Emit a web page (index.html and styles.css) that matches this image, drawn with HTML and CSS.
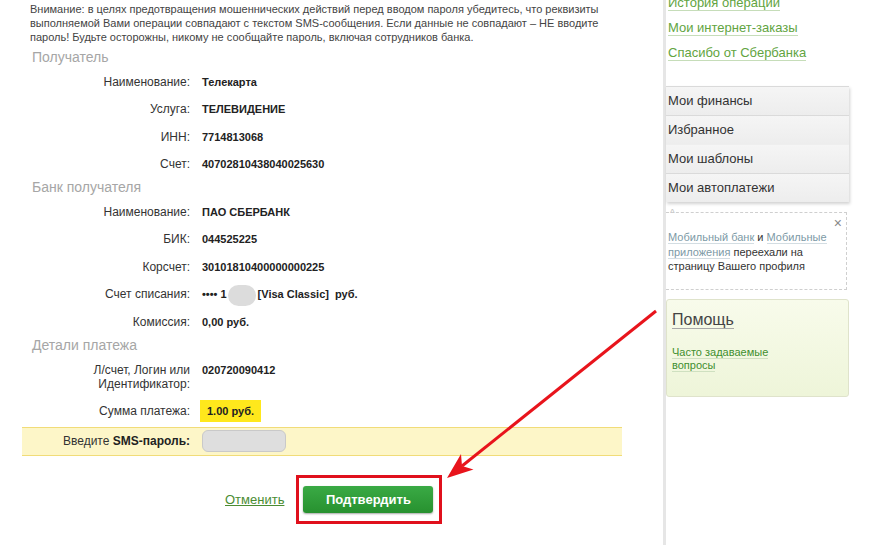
FILE: index.html
```html
<!DOCTYPE html>
<html lang="ru">
<head>
    <meta charset="UTF-8">
    <title>Подтверждение платежа</title>
    <link rel="stylesheet" href="styles.css">
</head>
<body>
<div class="page">
    <div class="main">
        <p class="warning">
            Внимание: в целях предотвращения мошеннических действий перед вводом пароля убедитесь, что реквизиты<br>
            выполняемой Вами операции совпадают с текстом SMS-сообщения. Если данные не совпадают – НЕ вводите<br>
            пароль! Будьте осторожны, никому не сообщайте пароль, включая сотрудников банка.
        </p>

        <div class="section-title">Получатель</div>
        <div class="row"><div class="label">Наименование:</div><div class="value">Телекарта</div></div>
        <div class="row"><div class="label">Услуга:</div><div class="value">ТЕЛЕВИДЕНИЕ</div></div>
        <div class="row"><div class="label">ИНН:</div><div class="value">7714813068</div></div>
        <div class="row"><div class="label">Счет:</div><div class="value">40702810438040025630</div></div>

        <div class="section-title">Банк получателя</div>
        <div class="row"><div class="label">Наименование:</div><div class="value">ПАО СБЕРБАНК</div></div>
        <div class="row"><div class="label">БИК:</div><div class="value">044525225</div></div>
        <div class="row"><div class="label">Корсчет:</div><div class="value">30101810400000000225</div></div>
        <div class="row">
            <div class="label">Счет списания:</div>
            <div class="value">•••• 1<span class="blur-pill"></span>[Visa Classic]&nbsp; руб.</div>
        </div>
        <div class="row"><div class="label">Комиссия:</div><div class="value">0,00 руб.</div></div>

        <div class="section-title">Детали платежа</div>
        <div class="row"><div class="label">Л/счет, Логин или<br>Идентификатор:</div><div class="value">020720090412</div></div>
        <div class="row"><div class="label">Сумма платежа:</div><div class="value"><span class="amount">1.00 руб.</span></div></div>

        <div class="sms">
            <div class="label">Введите <b>SMS-пароль:</b></div>
            <div class="sms-input"></div>
        </div>

        <div class="actions">
            <a href="#" class="cancel">Отменить</a>
            <div class="frame">
                <button class="btn">Подтвердить</button>
            </div>
        </div>
    </div>

    <div class="sidebar">
        <div class="side-links">
            <a href="#">История операций</a><br>
            <a href="#">Мои интернет-заказы</a><br>
            <a href="#">Спасибо от Сбербанка</a>
        </div>
        <div class="menu">
            <div class="menu-item">Мои финансы</div>
            <div class="menu-item">Избранное</div>
            <div class="menu-item plain">Мои шаблоны</div>
            <div class="menu-item">Мои автоплатежи</div>
        </div>
        <div class="notice">
            <span class="caret">^</span>
            <span class="close">×</span>
            <a href="#">Мобильный банк</a> и <a href="#">Мобильные<br>приложения</a> переехали на<br>страницу Вашего профиля
        </div>
        <div class="help">
            <div class="help-title"><span>Помощь</span></div>
            <a href="#">Часто задаваемые</a><br>
            <a href="#">вопросы</a>
        </div>
    </div>

    <!-- annotation arrow -->
    <svg class="arrow" width="884" height="545" viewBox="0 0 884 545">
        <line x1="656" y1="311" x2="462" y2="466" stroke="#e8141c" stroke-width="3"/>
        <polygon points="447,478 461,454 462,466 473.5,469.6" fill="#e8141c"/>
    </svg>
</div>
</body>
</html>
```

FILE: styles.css
```css
body {
    margin: 0;
    background: #fff;
    font-family: "Liberation Sans", Arial, sans-serif;
    color: #333;
}
.page {
    position: relative;
    display: flex;
    height: 545px;
    overflow: hidden;
}
.main {
    width: 663px;
    flex-shrink: 0;
}
.warning {
    margin: 2px 0 3px 30px;
    font-size: 11px;
    line-height: 14px;
    color: #444;
}
.section-title {
    padding-left: 32px;
    font-size: 14px;
    line-height: 20px;
    color: #a6a6a6;
}
.row {
    display: grid;
    grid-template-columns: 190px 1fr;
    column-gap: 12px;
    padding: 7.5px 0 6px 0;
    line-height: 14px;
}
.label {
    text-align: right;
    font-size: 12px;
    color: #333;
}
.value {
    font-size: 11px;
    font-weight: bold;
    color: #222;
}
.blur-pill {
    display: inline-block;
    width: 28px;
    height: 21px;
    margin: -4px 2px -4px 1px;
    vertical-align: middle;
    border-radius: 11px;
    background: #dcdcdc;
}
.amount {
    display: inline-block;
    margin: -4px 0 -4px -2px;
    padding: 4px 7px;
    background: #ffe81c;
}
.sms {
    display: grid;
    grid-template-columns: 168px 1fr;
    column-gap: 12px;
    align-items: center;
    height: 27px;
    margin: 2.5px 41px 0 22px;
    background: #fdf6c8;
    border-top: 1px solid #f1dc78;
    border-bottom: 1px solid #f1dc78;
}
.sms .label b {
    color: #222;
}
.sms-input {
    width: 82px;
    height: 20px;
    border: 1px solid #c9c9c9;
    border-radius: 6px;
    background: #dedede;
}
.actions {
    display: flex;
    align-items: center;
    gap: 12px;
    margin-top: 19px;
    padding-left: 225px;
}
.cancel {
    font-size: 13px;
    color: #4a8c32;
}
.frame {
    border: 3px solid #e0101c;
    padding: 8px 6px 8px 4px;
}
.btn {
    display: block;
    width: 130px;
    height: 27px;
    border: none;
    border-radius: 3px;
    background: linear-gradient(#3aaa45, #27912f);
    box-shadow: 0 1px 2px rgba(0, 0, 0, 0.35);
    color: #fff;
    font-family: inherit;
    font-size: 13px;
    font-weight: bold;
}
.sidebar {
    width: 183px;
    flex-shrink: 0;
    border-left: 3px solid #e6e6e6;
}
.side-links {
    height: 96.5px;
    margin-top: -10.5px;
    padding-left: 2px;
    font-size: 13px;
    line-height: 25px;
}
.side-links a {
    color: #62a441;
    text-decoration: none;
    border-bottom: 1px solid #c6ddb9;
}
.menu {
    box-shadow: 1px 2px 3px rgba(0, 0, 0, 0.18);
}
.menu-item {
    height: 28px;
    line-height: 28px;
    padding-left: 2px;
    font-size: 13px;
    color: #333;
    border-top: 1px solid #dadada;
    background: linear-gradient(#f5f5f5, #ededed);
}
.menu-item.plain {
    border-top-color: #eeeeee;
}
.notice {
    position: relative;
    margin: 10px 2px 0 0;
    padding: 17px 4px 15px 2px;
    border: 1px dashed #cfcfcf;
    border-left: none;
    font-size: 11px;
    line-height: 14.5px;
    color: #333;
}
.notice a {
    color: #7d9aa6;
    text-decoration: none;
    border-bottom: 1px solid #d3dde2;
}
.caret {
    position: absolute;
    left: 4px;
    top: -4px;
    font-size: 10px;
    line-height: 10px;
    color: #c4c4c4;
}
.close {
    position: absolute;
    right: 4px;
    top: 3px;
    font-size: 14px;
    line-height: 14px;
    color: #888;
}
.help {
    margin-top: 9px;
    padding: 9px 4px 24px 5px;
    border: 1px solid #dfe3cb;
    border-radius: 3px;
    background: linear-gradient(#f8fbeb, #eef5d9);
    font-size: 11px;
    line-height: 13px;
}
.help-title {
    margin-bottom: 15.5px;
    font-size: 16px;
    line-height: 22px;
    color: #444;
}
.help-title span {
    border-bottom: 1px solid #a8a8a8;
}
.help a {
    color: #3f8f2f;
    text-decoration: none;
    border-bottom: 1px solid #cfe0c0;
}
.arrow {
    position: absolute;
    left: 0;
    top: 0;
    pointer-events: none;
}
```
